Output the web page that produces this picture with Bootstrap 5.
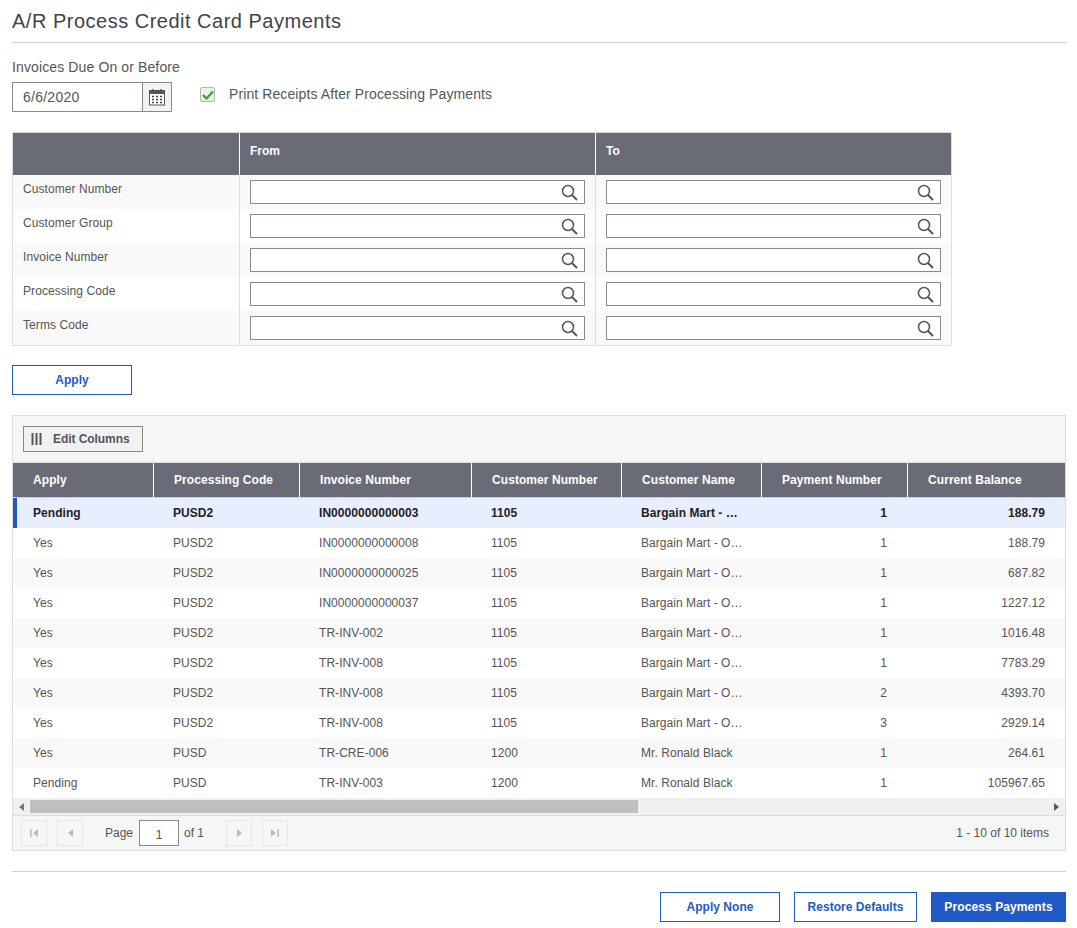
<!DOCTYPE html>
<html lang="en"><head><meta charset="utf-8"><title>A/R Process Credit Card Payments</title>
<link href="https://cdn.jsdelivr.net/npm/bootstrap@5.3.0/dist/css/bootstrap.min.css" rel="stylesheet">
<style>
html,body{background:#fff}
body{font-family:"Liberation Sans",Arial,sans-serif;font-size:12px;color:#4a4a4a;height:928px;overflow:hidden}
.pg{padding:0 11px 0 12px}
.ttl{font-size:20px;font-weight:400;line-height:24px;color:#3e434e;margin:0;padding:9px 0 9px;border-bottom:1px solid #d0d0d0;letter-spacing:.5px}
.lbl{font-size:14px;line-height:18px;color:#555;margin-top:15px;letter-spacing:.12px}
.datebox{width:160px;height:30px;border:1px solid #8d8a84;margin-top:6px}
.datebox span.v{flex:1;padding-left:10px;font-size:14px;line-height:29px;color:#555;letter-spacing:.25px}
.calbtn{width:29px;border-left:1px solid #8d8a84;background:#f2f2f4}
.chkbox{width:15px;height:15px;border:1px solid #b5b5b5;border-radius:2px;background:#eef1ea;margin-left:28px;margin-top:11px}
.chktxt{font-size:14px;line-height:18px;color:#555;margin-left:14px;margin-top:9px;letter-spacing:.1px}
.ftbl{width:940px;border:1px solid #ddd;border-top-color:#d8d8d8;margin-top:20px;border-collapse:separate;border-spacing:0;table-layout:fixed}
.ftbl th{background:#696c77;color:#fff;font-size:12px;font-weight:700;height:42px;padding:0 10px 6px;border-left:1px solid #fff}
.ftbl th:first-child{border-left:0}
.ftbl td{height:34px;padding:0 10px;border-left:1px solid #ddd;vertical-align:top}
.ftbl td:first-child{border-left:0;padding-top:7px;line-height:15px;color:#555;letter-spacing:.07px}
.ftbl tr:nth-child(odd) td{background:#f9f9f9}
.lkp{height:24px;border:1px solid #8d8a84;background:#fff;margin-top:5px;padding-right:6px}
.outbtn{border:1px solid #2159c7;background:#fff;color:#2159c7;font-weight:700;font-size:12px;height:30px;padding:0;border-radius:0;letter-spacing:.03px}
.outbtn:hover{background:#fff;color:#2159c7;border-color:#2159c7}
.solbtn{border:1px solid #2159c7;background:#2159c7;color:#fff;font-weight:700;font-size:12px;height:30px;padding:0;border-radius:0;letter-spacing:.1px}
.solbtn:hover{background:#2159c7;color:#fff}
.applyb{width:120px;margin-top:19px;display:block}
.btnw1{width:120px}
.btnw2{width:123px}
.btnw3{width:135px}
.grd{border:1px solid #ddd;margin-top:20px}
.tbar{height:47px;background:#f5f6f6;padding:10px;border-bottom:1px solid #ddd}
.edbtn{width:120px;height:26px;border:1px solid #8d8a84;background:#f1f1f4;color:#555;font-weight:700;font-size:12px;padding:0 0 0 7px;gap:11px;letter-spacing:-.06px}
.gtbl{width:1052px;table-layout:fixed;border-collapse:separate;border-spacing:0;margin:0}
.gtbl th{background:#696c77;color:#fff;font-weight:700;font-size:12px;height:35px;padding:0 20px;border-left:1px solid #fff;border-bottom:1px solid #ccc;white-space:nowrap;letter-spacing:.07px}
.gtbl th:first-child{border-left:0}
.gtbl td{height:30px;padding:0 20px;white-space:nowrap;color:#555;vertical-align:middle;letter-spacing:.05px}
.gtbl tbody tr:nth-child(odd) td{background:#f9f9f9}
.gtbl tbody tr.sel td{background:#e7eefd;color:#222;font-weight:700}
.gtbl tbody tr.sel td:first-child{border-left:4px solid #2159c7;padding-left:16px}
.gtbl td.num{text-align:right}
.hsb{height:17px;background:#f0f0f0;padding:2px 0 2px 0;border-bottom:0}
.hsarr{width:17px;height:13px}
.hsth{width:608px;height:13px;background:#bfbfbf}
.pgr{height:35px;background:#f5f6f6;border-top:1px solid #ddd;padding:0 16px 0 8px}
.pgb{width:26px;height:26px;border:1px solid #e6e6e6;background:#f5f6f6}
.pgb2{margin-left:10px}
.pgb3{margin-right:22px}
.pgb4{margin-left:22px}
.pginp{width:40px;height:26px;border:1px solid #8d8a84;background:#fff;text-align:center;line-height:28px;color:#555;margin:0 5px 0 6px}
.pgtxt{color:#555}
.botln{border-top:1px solid #d0d0d0;margin-top:20px;padding-top:20px;gap:14px}
</style></head>
<body>
<main class="pg">
<h1 class="ttl">A/R Process Credit Card Payments</h1>
<div class="lbl">Invoices Due On or Before</div>
<div class="d-flex">
<div class="datebox d-flex"><span class="v">6/6/2020</span>
<span class="calbtn d-flex align-items-center justify-content-center">
<svg width="16" height="18" viewBox="0 0 16 18"><rect x=".5" y="2.5" width="15" height="14.5" fill="#fff" stroke="#555"/><rect x="1" y="3" width="14" height="3" fill="#555"/><path d="M4 1v3M12 1v3" stroke="#555" stroke-width="1.4"/><path d="M3 8.5h2M7 8.5h2M11 8.5h2M3 11.5h2M7 11.5h2M11 11.5h2M3 14.5h2M7 14.5h2M11 14.5h2" stroke="#444" stroke-width="1.6"/></svg>
</span></div>
<span class="chkbox d-flex align-items-center justify-content-center">
<svg width="12" height="10" viewBox="0 0 12 10"><path d="M1 5l3.5 3.5L11 1.5" fill="none" stroke="#3da53a" stroke-width="2.4"/></svg>
</span>
<span class="chktxt">Print Receipts After Processing Payments</span>
</div>
<table class="ftbl">
<colgroup><col style="width:226px"><col style="width:356px"><col style="width:356px"></colgroup>
<thead><tr><th></th><th>From</th><th>To</th></tr></thead>
<tbody id="ft"></tbody>
</table>
<button class="btn outbtn applyb">Apply</button>
<section class="grd">
<div class="tbar"><button class="btn edbtn d-flex align-items-center rounded-0">
<svg width="11" height="12" viewBox="0 0 11 12"><path d="M1.5 0v12M5.5 0v12M9.5 0v12" stroke="#555" stroke-width="2"/></svg>
<span>Edit Columns</span></button></div>
<table class="gtbl">
<colgroup><col style="width:140px"><col style="width:146px"><col style="width:172px"><col style="width:150px"><col style="width:140px"><col style="width:146px"><col style="width:158px"></colgroup>
<thead><tr><th>Apply</th><th>Processing Code</th><th>Invoice Number</th><th>Customer Number</th><th>Customer Name</th><th>Payment Number</th><th>Current Balance</th></tr></thead>
<tbody id="gb"></tbody>
</table>
<div class="hsb d-flex align-items-center">
<span class="hsarr d-flex align-items-center justify-content-center"><svg width="5" height="8" viewBox="0 0 5 8"><path d="M5 0v8L0 4z" fill="#777"/></svg></span>
<span class="hsth"></span>
<span class="hsarr d-flex align-items-center justify-content-center ms-auto"><svg width="5" height="8" viewBox="0 0 5 8"><path d="M0 0v8l5-4z" fill="#555"/></svg></span>
</div>
<div class="pgr d-flex align-items-center">
<span class="pgb d-flex align-items-center justify-content-center"><svg width="8" height="8" viewBox="0 0 8 8"><path d="M0 0h1.6v8H0zM8 0v8L3 4z" fill="#bbb"/></svg></span>
<span class="pgb pgb2 pgb3 d-flex align-items-center justify-content-center"><svg width="5" height="8" viewBox="0 0 5 8"><path d="M5 0v8L0 4z" fill="#bbb"/></svg></span>
<span class="pgtxt">Page</span><span class="pginp">1</span><span class="pgtxt">of 1</span>
<span class="pgb pgb4 d-flex align-items-center justify-content-center"><svg width="5" height="8" viewBox="0 0 5 8"><path d="M0 0v8l5-4z" fill="#bbb"/></svg></span>
<span class="pgb pgb2 d-flex align-items-center justify-content-center"><svg width="8" height="8" viewBox="0 0 8 8"><path d="M0 0v8l5-4zM6.4 0H8v8H6.4z" fill="#bbb"/></svg></span>
<span class="pgtxt ms-auto">1 - 10 of 10 items</span>
</div>
</section>
<div class="botln d-flex justify-content-end">
<button class="btn outbtn btnw1">Apply None</button>
<button class="btn outbtn btnw2">Restore Defaults</button>
<button class="btn solbtn btnw3">Process Payments</button>
</div>
</main>
<script>
const mag='<svg width="17" height="17" viewBox="0 0 17 17"><circle cx="7" cy="7" r="5.5" fill="none" stroke="#555" stroke-width="1.5"/><path d="M11 11L16 16" stroke="#555" stroke-width="2"/></svg>';
const lk='<div class="lkp d-flex align-items-center justify-content-end">'+mag+'</div>';
document.getElementById('ft').innerHTML=['Customer Number','Customer Group','Invoice Number','Processing Code','Terms Code'].map(n=>`<tr><td>${n}</td><td>${lk}</td><td>${lk}</td></tr>`).join('');
const B='Bargain Mart - O…';
const R=[['Pending','PUSD2','IN0000000000003','1105','Bargain Mart - …',1,'188.79'],['Yes','PUSD2','IN0000000000008','1105',B,1,'188.79'],['Yes','PUSD2','IN0000000000025','1105',B,1,'687.82'],['Yes','PUSD2','IN0000000000037','1105',B,1,'1227.12'],['Yes','PUSD2','TR-INV-002','1105',B,1,'1016.48'],['Yes','PUSD2','TR-INV-008','1105',B,1,'7783.29'],['Yes','PUSD2','TR-INV-008','1105',B,2,'4393.70'],['Yes','PUSD2','TR-INV-008','1105',B,3,'2929.14'],['Yes','PUSD','TR-CRE-006','1200','Mr. Ronald Black',1,'264.61'],['Pending','PUSD','TR-INV-003','1200','Mr. Ronald Black',1,'105967.65']];
document.getElementById('gb').innerHTML=R.map((r,i)=>`<tr class="${i==0?'sel':''}">`+r.map((c,j)=>`<td class="${j>4?'num':''}">${c}</td>`).join('')+'</tr>').join('');
</script>
</body></html>
